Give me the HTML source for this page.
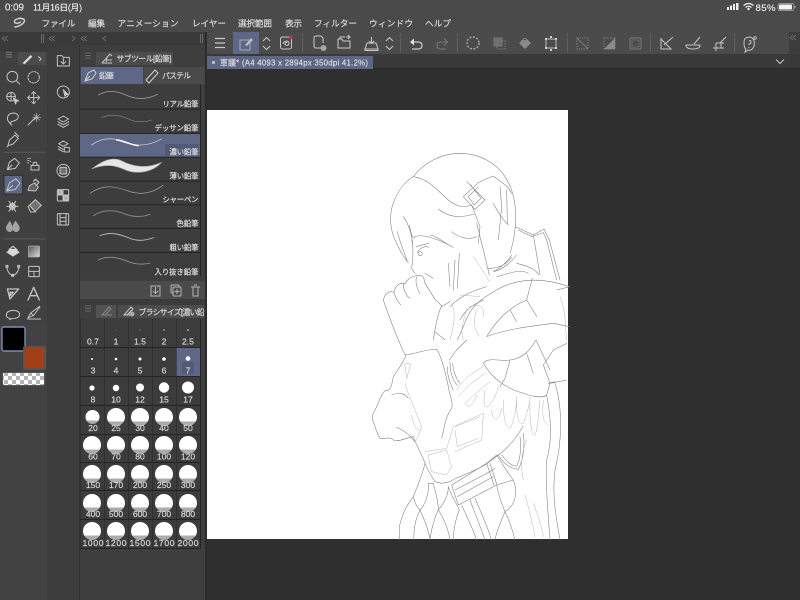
<!DOCTYPE html>
<html lang="ja"><head><meta charset="utf-8"><title>Clip Studio Paint</title>
<style>
html,body{margin:0;padding:0;background:#2f2f2f;width:800px;height:600px;overflow:hidden}
svg{display:block;position:absolute;left:0;top:0;filter:blur(.35px)}
text{font-family:"Liberation Sans","Noto Sans CJK JP",sans-serif;fill:#d6d6d6;stroke:#d6d6d6;stroke-width:.2}
.i{fill:none;stroke:#c4c4c4;stroke-width:3;stroke-linejoin:round;stroke-linecap:round}
.t{fill:none;stroke:#bdbdbd;stroke-width:3}
.a{fill:none;stroke:#808080;stroke-width:1.7;stroke-linecap:round;stroke-linejoin:round}
.b{fill:none;stroke:#b4b4b4;stroke-width:1.5;stroke-linecap:round;stroke-linejoin:round}
.m{font-size:8.6px}
.l{font-size:7.4px;text-anchor:end;fill:#dedede;stroke:#dedede}
.n{font-size:8.6px;text-anchor:middle;fill:#d4d4d4;stroke:#d4d4d4}
</style></head><body>
<svg width="800" height="600" viewBox="0 0 800 600" xmlns="http://www.w3.org/2000/svg">
<defs>
<linearGradient id="c" x1="0" y1="0" x2="0" y2="1"><stop offset=".74" stop-color="#fff"/><stop offset=".74" stop-color="#ababab"/></linearGradient>
<linearGradient id="g" x1="0" y1="0" x2="1" y2="1"><stop offset="0" stop-color="#555"/><stop offset="1" stop-color="#ddd"/></linearGradient>
<pattern id="ch" width="8" height="8" patternUnits="userSpaceOnUse"><rect width="8" height="8" fill="#fff"/><rect width="4" height="4" fill="#b5b5b5"/><rect x="4" y="4" width="4" height="4" fill="#b5b5b5"/></pattern>
</defs>
<rect width="800" height="600" fill="#2f2f2f"/>
<!-- top -->
<rect width="800" height="32" fill="#4a4a4a"/>
<text x="5" y="10.500" font-size="9.800" textLength="19" style="fill:#f0f0f0">0:09</text>
<text x="33" y="10.500" font-size="8.800" textLength="49" style="fill:#f0f0f0">11月16日(月)</text>
<g fill="#eee"><rect x="727" y="7" width="2" height="3"/><rect x="730" y="5.500" width="2" height="4.500"/><rect x="733" y="4" width="2" height="6"/><rect x="736" y="3" width="2.500" height="7"/></g>
<g fill="none" stroke="#eee" stroke-width="1.200"><path d="M743.500 5.500Q748.500 1.500 753.500 5.500M745.500 7.500Q748.500 5 751.500 7.500"/></g><circle cx="748.500" cy="9" r="1.200" fill="#eee"/>
<text x="755.500" y="11" font-size="9.600" textLength="20" style="fill:#eee">85%</text>
<rect x="778" y="3.500" width="16" height="7" rx="2" fill="none" stroke="#aaa" stroke-width=".8"/><rect x="779" y="4.500" width="13" height="5" rx="1" fill="#f4f4f4"/><rect x="794.500" y="6" width="1" height="2" fill="#aaa"/>
<path d="M15 27C21 26 26 22 24 19.500C21 17 14 19 14.500 22C15 24 19 23.500 20.500 22" fill="none" stroke="#cfcfcf" stroke-width="1.500" stroke-linecap="round"/>
<text class="m" x="41.500" y="26.500" textLength="34">ファイル</text>
<text class="m" x="88" y="26.500" textLength="17">編集</text>
<text class="m" x="117.500" y="26.500" textLength="61">アニメーション</text>
<text class="m" x="192" y="26.500" textLength="34">レイヤー</text>
<text class="m" x="238" y="26.500" textLength="34">選択範囲</text>
<text class="m" x="285" y="26.500" textLength="17">表示</text>
<text class="m" x="314" y="26.500" textLength="43">フィルター</text>
<text class="m" x="369" y="26.500" textLength="44">ウィンドウ</text>
<text class="m" x="425" y="26.500" textLength="26">ヘルプ</text>
<!-- toolbar -->
<rect x="0" y="32" width="207" height="568" fill="#3e3e3e"/>
<rect x="207" y="32" width="582" height="22" fill="#4b4b4b"/>
<rect x="789" y="32" width="11" height="22" fill="#3c3c3c"/>
<rect x="207" y="54" width="593" height="15" fill="#393939"/>
<rect x="207" y="68" width="593" height="1" fill="#2a2a2a"/>
<rect x="233" y="32" width="26" height="22" fill="#5e6886"/>
<rect x="207" y="56" width="166" height="13" fill="#5d6785"/>
<circle cx="213.500" cy="62.500" r="1.500" fill="#c8c8c8"/>
<text x="220" y="65.500" font-size="7.800" textLength="148" style="fill:#dcdcdc">軍議* (A4 4093 x 2894px 350dpi 41.2%)</text>
<path d="M776 59.500l4 4 4-4" fill="none" stroke="#c8c8c8" stroke-width="1"/>
<g fill="#5f5f5f"><rect x="302" y="33" width="1" height="20"/><rect x="400" y="33" width="1" height="20"/><rect x="457" y="33" width="1" height="20"/><rect x="567" y="33" width="1" height="20"/><rect x="650" y="33" width="1" height="20"/><rect x="734" y="33" width="1" height="20"/></g>
<g fill="none" stroke="#c8c8c8" stroke-width="1">
<path d="M215 38.500h10M215 43h10M215 47.500h10" stroke-width="1.200"/>
<rect x="240" y="40" width="10" height="10" stroke="#aab"/><path d="M245 45l6-7 2 2-6 6z" fill="#bbb" stroke="none"/>
<path d="M263 41l3.500-3.500 3.500 3.500M263 46l3.500 3.500 3.500-3.500"/>
<rect x="280.500" y="37" width="11" height="12" rx="2"/><path d="M283 44c0-3 6-4 6-1s-4 3-4 1 2-2 2-1"/>
<path d="M322 48h-6q-2 0-2-2v-8q0-2 2-2h5l2 2v5"/>
<path d="M338 48v-9h4l1 2h7v7zM340 39v-2h5M346 37h4M348 35l2 2-2 2"/>
<path d="M365 49h13l-2-6h-9zM371.500 37v6M369 41l2.500 2.500 2.500-2.500M365 49v1.500h13v-1.500"/>
<path d="M386 41l3.500-3.500 3.500 3.500M386 46l3.500 3.500 3.500-3.500"/>
<path d="M411 42h7q4 0 4 3.500t-4 3.500h-6" stroke-width="1.200"/>
</g>
<circle cx="323.500" cy="48" r="3" fill="#a5a5a5"/><circle cx="291" cy="37.500" r="1.800" fill="#c9304f"/>
<path d="M414 38.500l-4 3.500 4 3.500z" fill="#ddd"/>
<g fill="none" stroke="#7a7a7a" stroke-width="1">
<path d="M447 42h-6q-4 0-4 3.500t4 3.500h5M444 38.500l3.500 3.500-3.500 3.500"/>
<circle cx="473" cy="43" r="6" stroke-dasharray="2 1.500" stroke="#a8a8a8" stroke-width="1.400"/>
<rect x="494" y="38" width="8" height="8" fill="#6c6c6c"/><rect x="497" y="41" width="8" height="8" stroke-dasharray="1.500 1"/>
<rect x="577" y="38" width="11" height="11" stroke-dasharray="1.500 1"/><path d="M577 38l11 11"/>
<rect x="604" y="38" width="11" height="11" stroke-dasharray="1.500 1"/>
<rect x="630" y="38" width="11" height="11" rx="1"/><rect x="632" y="40" width="7" height="7" stroke-dasharray="1.500 1"/>
</g>
<path d="M519 43l6-5 6 5-6 6z" fill="#8a8a8a"/><path d="M522 40.500l3-2.500 3 2.500z" fill="#4b4b4b" stroke="#999" stroke-width=".6"/>
<path d="M604 49l11-11v11z" fill="#8a8a8a"/>
<g fill="none" stroke="#bdbdbd" stroke-width="1"><rect x="546" y="39" width="10" height="9"/></g>
<g fill="#ccc"><rect x="550" y="36" width="2" height="2"/><rect x="545" y="38" width="2" height="2"/><rect x="555" y="38" width="2" height="2"/><rect x="545" y="47" width="2" height="2"/><rect x="555" y="47" width="2" height="2"/><rect x="550" y="49" width="2" height="2"/></g>
<g fill="none" stroke="#c4c4c4" stroke-width="1">
<path d="M661 38v11h10l-10-10M664 45l9-8"/>
<path d="M686 45h14q0 4-7 4t-7-4zM694 44l6-7"/>
<path d="M713 48h11M716 43h8M716 43v8M721 43v5M720 43l6-6"/>
<path d="M746 38q-2 0-2 5t2 6l-1 3 3-2q3 1 5-2t1-7q-1-4-5-4zM749 41q2-1 2 1t-2 2v1M749 47v1"/><circle cx="755" cy="38" r="1.200"/>
</g>
<!-- panel chrome -->
<rect x="0" y="32" width="207" height="13" fill="#3a3a3a"/>
<g fill="none" stroke="#7a7a7a" stroke-width=".8"><path d="M5 36l-3 2.500 3 2.500M8 36l-3 2.500 3 2.500M52 36l-3 2.500 3 2.500M55 36l-3 2.500 3 2.500M72 36l3 2.500-3 2.500M84 36l-3 2.500 3 2.500M87 36l-3 2.500 3 2.500M106 36l-3 2.500 3 2.500M793 35l-3 2.500 3 2.500M796 35l-3 2.500 3 2.500"/></g>
<g fill="#6a6a6a"><rect x="41" y="34" width="1" height="9"/><rect x="43" y="34" width="1" height="9"/><rect x="200" y="34" width="1" height="9"/><rect x="202" y="34" width="1" height="9"/></g>
<rect x="47" y="45" width="32" height="555" fill="#3c3c3c"/>
<rect x="79" y="45" width="1" height="555" fill="#333"/>
<rect x="205" y="32" width="2" height="568" fill="#2c2c2c"/>
<!-- left tools panel -->
<rect x="0" y="45" width="47" height="555" fill="#404040"/>
<rect x="0" y="45" width="47" height="7" fill="#3a3a3a"/>
<rect x="18" y="52" width="28" height="13" fill="#4c4c4c"/>
<rect x="0" y="325" width="47" height="275" fill="#424242"/>
<rect x="2" y="327" width="23" height="24" rx="2" fill="#000" stroke="#7d8ab3" stroke-width="1.400"/>
<rect x="23" y="346" width="23" height="24" rx="2" fill="#555"/>
<rect x="24.500" y="347.500" width="19.500" height="20.500" rx="1" fill="#a33f17"/>
<rect x="2" y="372" width="43" height="14" rx="2" fill="#555"/>
<rect x="3" y="373" width="41" height="12" rx="1" fill="url(#ch)"/>
<g transform="translate(0,45) scale(.33333)">
<rect x="12" y="391" width="56" height="56" fill="#5e6886" stroke="#2d2d2d" stroke-width="3"/>
<g class="t"><path d="M18 22h18M18 29h18M18 36h18" stroke="#777"/></g>
<path d="M68 54l24-24 5 5-24 23z" fill="#ddd"/><path d="M115 35l8 6-4 6" class="i"/>
<g class="i">
<circle cx="37" cy="95" r="16"/><path d="M49 107l10 10"/>
<circle cx="101" cy="97" r="17" stroke-dasharray="5 4"/>
<circle cx="33" cy="155" r="13"/><path d="M20 155h26M33 142v26"/><path d="M40 160l16 7-7 3-2 7z" fill="#ccc"/>
<path d="M101 140v36M83 158h36M95 146l6-6 6 6M95 170l6 6 6-6M89 152l-6 6 6 6M113 152l6 6-6 6"/>
<path d="M34 238C14 224 22 205 40 204C60 205 60 224 40 228C30 230 28 238 36 240"/>
<path d="M84 240l20-20"/><path d="M110 205v24M98 217h24M102 209l16 16M118 209l-16 16" stroke-width="2"/>
<path d="M24 302l4-16 17-16 10 10-16 17zM44 262l12 12"/><path d="M24 302l-3 4"/>
<path d="M22 374l6-22 16-12 14 14-12 16zM22 374l14-14"/>
<path d="M93 361h24v14H93zM98 361l3-9h8l3 9M83 340h2M83 347h4M83 354h2M90 340h2M90 350h2"/>
<path d="M20 438l8-24 20-13 12 14-14 18zM20 438l18-17"/>
<path d="M84 436l5-14 14-8 12 12-8 12zM100 408l7-6 10 10-6 7" fill="#aaa" fill-opacity=".35"/>
<path d="M27 469l20 30M47 469l-20 30M37 472v24M20 484h34"/><circle cx="37" cy="484" r="9" fill="#bbb"/>
<path d="M84 485l22-21 18 17-22 20H92zM88 481l20 20"/>
</g>
<path d="M85 485l21-21 18 17-10 9-20-15z" fill="none"/><path d="M88 484l12 12 24-15-18-17z" fill="#d8d8d8" opacity=".35"/>
<g fill="#a4a4a4"><path d="M30 527c-8 12-12 16-12 22 0 7 6 12 12 12s8-6 8-12c0-6-4-12-8-22z"/><path d="M46 527c-6 10-9 16-9 22 0 7 6 12 11 12 6 0 11-5 11-12 0-6-7-14-13-22z"/></g>
<rect x="10" y="320.500" width="124" height="2.500" fill="#5f5f5f"/><rect x="10" y="580.500" width="124" height="2.500" fill="#5f5f5f"/>
<path d="M19 622l20-18 20 18-20 13z" fill="#d8d8d8"/><path d="M28 613l11-9 11 9z" fill="#404040" stroke="#d8d8d8" stroke-width="3"/>
<rect x="85" y="603" width="34" height="33" rx="3" fill="url(#g)" stroke="#aaa" stroke-width="2"/>
<g class="i">
<path d="M21 665q1 22 18 26 15-4 18-26"/><rect x="18" y="661" width="6" height="6"/><rect x="53" y="661" width="6" height="6"/><rect x="35" y="688" width="6" height="6" fill="#ccc"/>
<rect x="86" y="664" width="32" height="31" rx="2"/><path d="M86 679h32M102 679v16"/>
<path d="M22 732h34L30 762z M30 742h10l-9 10z" stroke-width="4"/>
<path d="M84 765l17-38 17 38M90 752h22" stroke-width="4"/>
<path d="M32 821q-14-2-13-12 1-12 21-13 18 1 19 12 0 12-24 13l-6 3z"/>
<path d="M82 822h40M84 818l8-14 8 8zM92 804l27-20M100 812l20-26"/>
</g>
</g>
<!-- middle column icons -->
<g transform="translate(0,45) scale(.33333)" class="i">
<path d="M172 63V32h14l4 5h18v26zM190 40v16M183 50l7 7 7-7"/>
<circle cx="190" cy="141" r="18"/><path d="M190 134l14 14-6 1-3 5z" fill="#ccc"/>
<path d="M190 213l16 9-16 9-16-9zM174 230l16 9 16-9M174 238l16 9 16-9"/>
<path d="M190 288l14 8-14 8-14-8zM175 305l15 8M175 312l15 8"/><rect x="193" y="307" width="15" height="14" stroke-dasharray="3 2"/>
<circle cx="190" cy="377" r="19"/><rect x="180" y="367" width="20" height="20" rx="3" fill="#aaa" fill-opacity=".5"/>
<rect x="172" y="434" width="34" height="34" rx="2"/><path d="M172 450h34M189 434v34"/><rect x="175" y="437" width="11" height="10" fill="#aaa"/><rect x="192" y="453" width="11" height="12" fill="#aaa"/>
<rect x="172" y="506" width="34" height="34" rx="2"/><path d="M180 506v34M198 506v34M180 518h18M180 529h18"/>
</g>
<!-- subtool -->
<rect x="80" y="45" width="125" height="20" fill="#3e3e3e"/>
<rect x="96" y="52" width="77" height="13" fill="#4c4c4c"/>
<g fill="none" stroke="#777" stroke-width=".8"><path d="M85 53h6M85 55.500h6M85 58h6"/></g>
<g fill="none" stroke="#c8c8c8" stroke-width="1"><path d="M102 63l8-9 2 2M102 63h10M107 60h5M106 62l1-5"/></g>
<text x="116.500" y="61.500" font-size="7.800" textLength="55">サブツール[鉛筆]</text>
<rect x="80" y="67" width="125" height="17" fill="#454545"/>
<rect x="81" y="67" width="62" height="17" fill="#5e6886"/>
<rect x="144" y="67" width="60" height="17" fill="#4a4a4a"/>
<g fill="none" stroke="#d0d0d0" stroke-width="1"><path d="M85 81l3-8 6-3 2 3-4 6zM85 81l5-5"/><path d="M146 80l9-10 3 3-9 10zM146 80l3 3"/></g>
<text x="99" y="78.500" font-size="8" textLength="15">鉛筆</text>
<text x="162" y="78.500" font-size="7.800" textLength="29">パステル</text>
<!-- list -->
<g>
<rect x="80" y="85.700" width="120" height="23" fill="#3d3d3d"/><rect x="80" y="109.700" width="120" height="23" fill="#3d3d3d"/>
<rect x="80" y="134" width="120" height="23" fill="#5e6886"/><rect x="80" y="157.700" width="120" height="23" fill="#3d3d3d"/>
<rect x="80" y="181.700" width="120" height="23" fill="#3d3d3d"/><rect x="80" y="205" width="120" height="23" fill="#3d3d3d"/>
<rect x="80" y="229" width="120" height="23" fill="#3d3d3d"/><rect x="80" y="252.700" width="120" height="23" fill="#3d3d3d"/>
</g>
<g fill="#242424"><rect x="80" y="108.700" width="120" height="1"/><rect x="80" y="132.800" width="120" height="1"/><rect x="80" y="156.700" width="120" height="1"/><rect x="80" y="180.700" width="120" height="1"/><rect x="80" y="204.300" width="120" height="1"/><rect x="80" y="228" width="120" height="1"/><rect x="80" y="252" width="120" height="1"/><rect x="200" y="85" width="1" height="191"/></g>
<rect x="165" y="144" width="34" height="12" fill="#515b77"/>
<g transform="translate(80,45) scale(.33333)" fill="none" stroke-linecap="round">
<path d="M55 150C90 130 120 142 150 155C180 165 210 160 232 148" stroke="#9a9a9a" stroke-width="2.500" stroke-dasharray="6 1.500"/>
<path d="M65 218C100 202 130 215 155 226C175 233 200 230 215 225" stroke="#8a8a8a" stroke-width="2" stroke-dasharray="5 2"/>
<path d="M35 300C70 272 115 280 150 295C185 308 220 295 245 282" stroke="#e4e4e8" stroke-width="2"/>
<path d="M110 285C130 288 145 298 175 302" stroke="#fff" stroke-width="4"/>
<path d="M35 372C70 345 100 333 130 350C165 367 205 370 245 352C215 385 165 388 135 374C100 358 70 358 35 372Z" fill="#f0f0f0" stroke="#aaa" stroke-width="2" opacity=".95"/>
<path d="M30 445C70 415 110 425 150 440C190 452 225 440 250 420" stroke="#b4b4b4" stroke-width="1.800"/>
<path d="M40 512C70 492 105 495 130 505C155 516 185 518 210 508" stroke="#858585" stroke-width="3"/>
<path d="M60 572C95 558 125 570 155 582C180 590 205 584 220 578" stroke="#c4c4c4" stroke-width="2.500"/>
<path d="M55 645C85 630 115 638 145 650C170 660 195 658 210 654" stroke="#9a9a9a" stroke-width="2.500" stroke-dasharray="4 2"/>
</g>
<text class="l" x="198.500" y="106.500" textLength="36">リアル鉛筆</text>
<text class="l" x="198.500" y="130.500" textLength="44">デッサン鉛筆</text>
<text class="l" x="198.500" y="154.500" textLength="29">濃い鉛筆</text>
<text class="l" x="198.500" y="178.500" textLength="29">薄い鉛筆</text>
<text class="l" x="198.500" y="202" textLength="36">シャーペン</text>
<text class="l" x="198.500" y="226" textLength="22">色鉛筆</text>
<text class="l" x="198.500" y="250" textLength="29">粗い鉛筆</text>
<text class="l" x="198.500" y="274.500" textLength="44">入り抜き鉛筆</text>
<rect x="80" y="281" width="125" height="18" fill="#4b4b4b"/>
<g fill="none" stroke="#b5b5b5" stroke-width="1">
<path d="M151 286h9v10h-9zM155.500 287v6M153 291l2.500 2.500 2.500-2.500"/>
<rect x="171" y="285" width="8" height="8" rx="1"/><rect x="173" y="287" width="8" height="9" rx="1" fill="#4b4b4b"/><path d="M177 289v5M174.500 291.500h5"/>
<path d="M191 287h9M193 287v9h5v-9M194 285h3"/>
</g>
<!-- brush size -->
<rect x="80" y="299" width="125" height="6" fill="#3b3b3b"/>
<rect x="96" y="305" width="20" height="13" fill="#515151"/><rect x="118" y="305" width="86" height="13" fill="#4c4c4c"/>
<g fill="none" stroke="#777" stroke-width=".8"><path d="M85 306h6M85 308.500h6M85 311h6"/></g>
<path d="M102 315l7-8 2 2-6 6zM102 315h10" fill="none" stroke="#888"/>
<path d="M124 315l7-8 2 2-6 6zM124 315h9" fill="none" stroke="#ccc"/><circle cx="132" cy="314" r="2.500" fill="#aaa"/>
<text x="138.500" y="315" font-size="7.800" textLength="66">ブラシサイズ[濃い鉛</text>
<rect x="80" y="319" width="121" height="230" fill="#242424"/>
<g fill="#3c3c3c">
<rect x="80.500" y="319" width="23.500" height="28"/><rect x="104.500" y="319" width="23.500" height="28"/><rect x="128.500" y="319" width="23.500" height="28"/><rect x="152.500" y="319" width="23.500" height="28"/><rect x="176.500" y="319" width="23.500" height="28"/>
<rect x="80.500" y="348" width="23.500" height="28"/><rect x="104.500" y="348" width="23.500" height="28"/><rect x="128.500" y="348" width="23.500" height="28"/><rect x="152.500" y="348" width="23.500" height="28"/><rect x="176.500" y="348" width="23.500" height="28" fill="#5e6886"/>
<rect x="80.500" y="377" width="23.500" height="28"/><rect x="104.500" y="377" width="23.500" height="28"/><rect x="128.500" y="377" width="23.500" height="28"/><rect x="152.500" y="377" width="23.500" height="28"/><rect x="176.500" y="377" width="23.500" height="28"/>
<rect x="80.500" y="406" width="23.500" height="28"/><rect x="104.500" y="406" width="23.500" height="28"/><rect x="128.500" y="406" width="23.500" height="28"/><rect x="152.500" y="406" width="23.500" height="28"/><rect x="176.500" y="406" width="23.500" height="28"/>
<rect x="80.500" y="435" width="23.500" height="27"/><rect x="104.500" y="435" width="23.500" height="27"/><rect x="128.500" y="435" width="23.500" height="27"/><rect x="152.500" y="435" width="23.500" height="27"/><rect x="176.500" y="435" width="23.500" height="27"/>
<rect x="80.500" y="463" width="23.500" height="27"/><rect x="104.500" y="463" width="23.500" height="27"/><rect x="128.500" y="463" width="23.500" height="27"/><rect x="152.500" y="463" width="23.500" height="27"/><rect x="176.500" y="463" width="23.500" height="27"/>
<rect x="80.500" y="491" width="23.500" height="28"/><rect x="104.500" y="491" width="23.500" height="28"/><rect x="128.500" y="491" width="23.500" height="28"/><rect x="152.500" y="491" width="23.500" height="28"/><rect x="176.500" y="491" width="23.500" height="28"/>
<rect x="80.500" y="520" width="23.500" height="28"/><rect x="104.500" y="520" width="23.500" height="28"/><rect x="128.500" y="520" width="23.500" height="28"/><rect x="152.500" y="520" width="23.500" height="28"/><rect x="176.500" y="520" width="23.500" height="28"/>
</g>
<rect x="182" y="362" width="12" height="12" rx="2" fill="#515b77"/>
<g fill="#fff">
<circle cx="116" cy="330.500" r=".3"/><circle cx="140" cy="330" r=".4"/><circle cx="164" cy="330" r=".6"/><circle cx="188" cy="330" r=".8"/>
<circle cx="92" cy="359" r="1"/><circle cx="116" cy="359" r="1.300"/><circle cx="140" cy="359" r="1.500"/><circle cx="164" cy="359" r="1.800"/><circle cx="188" cy="358.500" r="2.300"/>
<circle cx="92" cy="388" r="2.600"/><circle cx="116" cy="388" r="3.200"/><circle cx="140" cy="387.500" r="4"/><circle cx="164" cy="387.500" r="5.200"/><circle cx="188" cy="387.500" r="6"/>
</g>
<g fill="url(#c)">
<circle cx="92.500" cy="417" r="7"/><circle cx="116" cy="417" r="9"/><circle cx="140" cy="417" r="9"/><circle cx="164" cy="417" r="9"/><circle cx="188" cy="417" r="9"/>
<circle cx="92" cy="445" r="9"/><circle cx="116" cy="445" r="9"/><circle cx="140" cy="445" r="9"/><circle cx="164" cy="445" r="9"/><circle cx="188" cy="445" r="9"/>
<circle cx="92" cy="474" r="9"/><circle cx="116" cy="474" r="9"/><circle cx="140" cy="474" r="9"/><circle cx="164" cy="474" r="9"/><circle cx="188" cy="474" r="9"/>
<circle cx="92" cy="503" r="9"/><circle cx="116" cy="503" r="9"/><circle cx="140" cy="503" r="9"/><circle cx="164" cy="503" r="9"/><circle cx="188" cy="503" r="9"/>
<circle cx="92" cy="531" r="9"/><circle cx="116" cy="531" r="9"/><circle cx="140" cy="531" r="9"/><circle cx="164" cy="531" r="9"/><circle cx="188" cy="531" r="9"/>
</g>
<g>
<text class="n" x="93" y="344.500">0.7</text><text class="n" x="116" y="344.500">1</text><text class="n" x="140" y="344.500">1.5</text><text class="n" x="164" y="344.500">2</text><text class="n" x="188" y="344.500">2.5</text>
<text class="n" x="93" y="373.500">3</text><text class="n" x="116" y="373.500">4</text><text class="n" x="140" y="373.500">5</text><text class="n" x="164" y="373.500">6</text><text class="n" x="188" y="373.500">7</text>
<text class="n" x="93" y="402.500">8</text><text class="n" x="116" y="402.500">10</text><text class="n" x="140" y="402.500">12</text><text class="n" x="164" y="402.500">15</text><text class="n" x="188" y="402.500">17</text>
<text class="n" x="93" y="431">20</text><text class="n" x="116" y="431">25</text><text class="n" x="140" y="431">30</text><text class="n" x="164" y="431">40</text><text class="n" x="188" y="431">50</text>
<text class="n" x="93" y="459.500">60</text><text class="n" x="116" y="459.500">70</text><text class="n" x="140" y="459.500">80</text><text class="n" x="164" y="459.500">100</text><text class="n" x="188" y="459.500">120</text>
<text class="n" x="93" y="488">150</text><text class="n" x="116" y="488">170</text><text class="n" x="140" y="488">200</text><text class="n" x="164" y="488">250</text><text class="n" x="188" y="488">300</text>
<text class="n" x="93" y="517">400</text><text class="n" x="116" y="517">500</text><text class="n" x="140" y="517">600</text><text class="n" x="164" y="517">700</text><text class="n" x="188" y="517">800</text>
<text class="n" x="93" y="546" textLength="21">1000</text><text class="n" x="116" y="546" textLength="21">1200</text><text class="n" x="140" y="546" textLength="21">1500</text><text class="n" x="164" y="546" textLength="21">1700</text><text class="n" x="188" y="546" textLength="21">2000</text>
</g>
<!-- canvas -->
<rect x="207" y="110" width="361" height="429" fill="#fff"/>
<g transform="translate(370,140) scale(.33333)">
<path class="a" d="M130 110C160 70 210 42 265 40C330 40 380 70 405 110C425 140 437 180 437 230C437 270 430 310 420 340"/>
<path class="a" d="M130 110C95 130 75 170 65 205C58 240 62 280 85 320C95 345 105 355 115 368"/>
<path class="a" d="M130 110C180 118 205 155 235 180C260 200 280 205 305 195M205 207C230 228 265 237 312 222"/>
<path class="a" d="M290 125L345 180L315 208L280 170L325 128L345 118L370 108L412 140L425 160M302 135L333 175L312 195L295 170L325 140"/>
<path class="a" d="M100 230C118 255 125 285 128 310M82 275C90 310 105 340 112 365M118 255C125 290 130 300 135 290C160 280 210 300 250 322C215 305 205 290 180 285"/>
<path class="a" d="M125 300C133 330 127 370 125 385L135 400M138 320L176 310M142 338C150 320 170 318 176 322M150 335a6 6 0 1 0 1 0M165 400L190 415M255 360L250 450M268 340L262 445M235 370L240 440"/>
<path class="a" d="M40 480C45 460 60 450 72 457C75 435 95 425 105 432C110 418 125 410 135 408C152 403 162 405 165 430L195 478L215 497M140 410C135 425 140 445 150 460M100 432C100 450 110 470 120 475M72 457C75 475 85 485 92 495M40 480C50 510 65 550 85 600"/>
<path class="a" d="M305 195L330 260L325 310M370 190C385 220 400 240 415 255M390 140L395 200L385 300M410 150L412 250M320 250L340 330L358 405M440 345C420 370 395 390 370 395C395 382 412 365 425 345M380 410C420 400 450 385 475 400M355 385C390 385 410 372 425 352M440 370C480 380 500 390 505 405M245 275C270 295 300 300 320 290"/>
<path class="a" d="M435 260L490 285L522 267L538 300L570 420M490 285L510 405M445 270L485 290L520 278L530 300L560 420"/>
<path class="a" d="M360 462C420 420 500 405 598 440M360 462C330 480 300 500 280 560L262 600M350 590C380 540 420 500 470 480L487 415M350 590C400 570 470 560 550 550L598 560M470 480L500 530M420 510L440 545M560 450L600 440"/>
<path class="a" d="M215 497C200 530 195 570 190 600M240 485L215 500M240 500C270 470 300 455 350 440M195 575L225 600M270 540C290 500 320 490 340 480"/>
<path class="b" d="M245 490C260 520 250 560 240 600M290 510C280 540 270 570 280 600M270 465L330 470M300 500C330 490 345 500 340 530M310 350C330 380 345 400 358 425M570 470C590 520 585 570 590 600M320 510C310 540 310 570 330 590"/>
</g>
<g transform="translate(370,340) scale(.33333)">
<path class="a" d="M85 0C95 20 100 40 108 45C140 40 180 25 200 28M108 45C100 70 85 85 70 110C65 140 60 155 45 152C30 165 25 195 15 210C5 225 5 240 12 250C20 275 25 290 32 296C45 295 65 290 72 302C95 305 115 290 130 290M65 165C85 155 105 160 115 175M80 262C100 270 120 285 135 305"/>
<path class="a" d="M200 28C215 50 225 90 235 140C240 170 250 190 245 205C230 225 225 245 222 265L215 295M130 290C140 320 155 340 165 370C175 395 185 410 195 425L215 430L240 425C250 415 290 405 345 375L385 345C420 320 440 290 460 258"/>
<path class="a" d="M238 60L260 30L290 0M232 80C232 110 240 130 250 150M240 65C240 100 250 125 262 135M248 70C250 100 262 120 270 130"/>
<path class="a" d="M340 70C370 120 410 145 460 160C490 170 520 175 530 165L540 130L590 120M340 70C355 50 385 65 420 60C460 55 480 30 498 0M540 130L520 75L550 30L590 10M420 60L405 115L390 140M470 40L490 100M498 0L540 90M535 130L555 125"/>
<path class="a" d="M530 165C540 220 550 290 530 360C525 420 535 530 540 600M555 130C580 210 575 310 555 390C545 470 560 540 570 600"/>
<path class="b" d="M260 150C275 125 300 100 340 80M265 170C285 145 315 120 345 100M285 190C305 170 335 145 360 125M285 190C295 205 305 205 320 165M345 150C340 190 340 205 355 200C370 185 380 160 385 140M365 210C365 240 385 255 395 205M400 180C400 230 405 265 420 265C430 250 440 210 440 170M440 185C440 230 445 255 460 250C470 220 480 195 480 170M480 190C478 240 485 290 495 285C505 260 505 220 510 180M520 180C515 230 520 250 535 255"/>
<path class="b" d="M105 70L122 72L110 115ZM105 130C115 165 130 195 155 260C145 290 140 300 135 305M125 225C130 255 140 275 150 270"/>
<path class="b" d="M165 335L230 325L250 260L340 220L335 300L255 335M175 345L230 330L245 380L230 405L185 395ZM255 260L330 230M255 270L262 320L325 295"/>
<path class="a" d="M245 435L350 370L380 345L415 400L430 420L380 435L265 495ZM255 450L350 400L375 385M262 470L370 410M350 370L372 435M360 370L380 432M385 345C400 370 420 385 445 388C460 360 465 320 460 280M395 345C410 365 425 380 440 378C450 360 455 325 450 290"/>
<path class="a" d="M165 370C155 410 142 440 130 470C135 490 140 500 150 510C165 495 178 460 175 430L190 430C200 470 205 490 205 510C220 490 235 470 235 440C245 470 262 495 268 510C255 540 250 580 250 600M130 470C115 490 100 510 88 560L88 600M150 510C135 540 130 570 132 600M150 510C165 540 178 580 180 600M205 510C190 540 182 580 180 600M205 510C225 540 238 580 240 600"/>
<path class="a" d="M275 495C290 530 310 570 320 600M300 480C315 520 335 570 345 600M315 475C335 520 355 570 365 600M380 435C385 465 395 490 405 515C395 540 380 570 375 600M430 420C440 445 445 490 405 515C420 545 430 580 435 600"/>
<path class="b" d="M465 465C480 520 490 560 495 590M490 490C505 530 515 560 520 590M460 420C450 370 455 340 470 300"/>
</g>
</svg>
</body></html>
